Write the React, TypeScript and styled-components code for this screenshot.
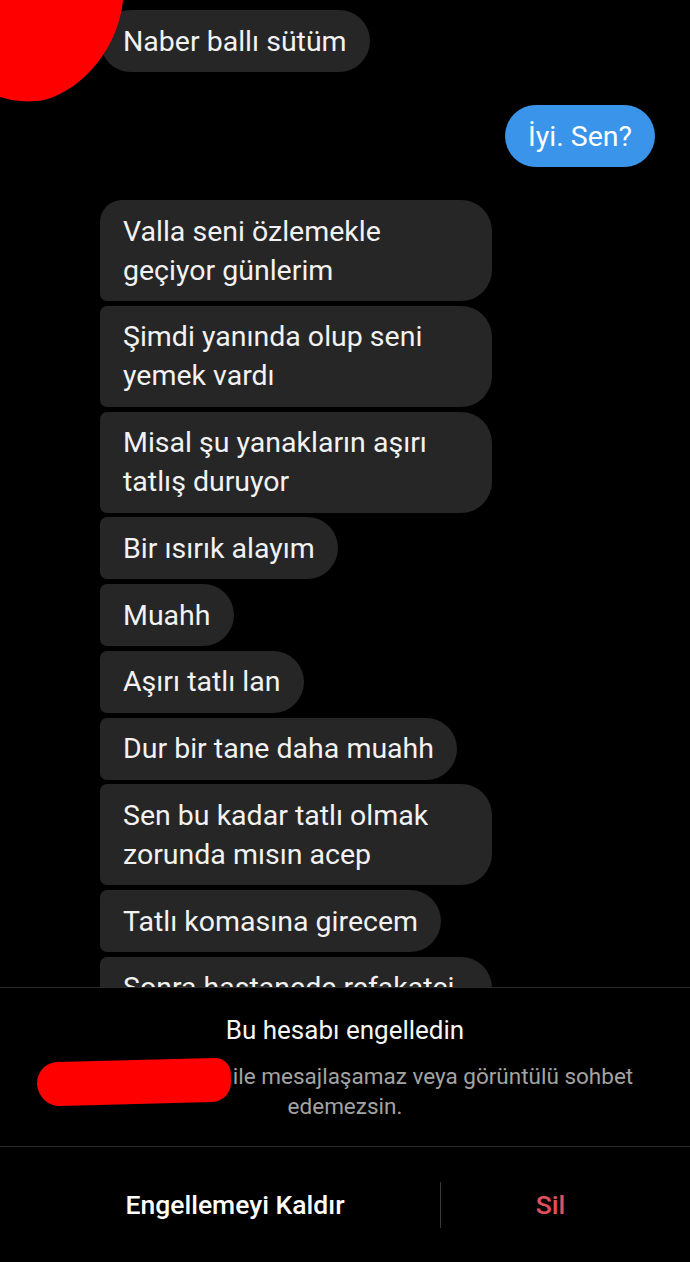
import styled, { createGlobalStyle } from 'styled-components';

const GlobalStyle = createGlobalStyle`
  html, body {
    margin: 0;
    padding: 0;
    background: #000;
  }
  body {
    font-family: Roboto, "Noto Sans", "Liberation Sans", sans-serif;
    -webkit-font-smoothing: antialiased;
  }
`;

type Pos = 'single' | 'first' | 'middle' | 'last';

const incoming = [
  'Valla seni özlemekle geçiyor günlerim',
  'Şimdi yanında olup seni yemek vardı',
  'Misal şu yanakların aşırı tatlış duruyor',
  'Bir ısırık alayım',
  'Muahh',
  'Aşırı tatlı lan',
  'Dur bir tane daha muahh',
  'Sen bu kadar tatlı olmak zorunda mısın acep',
  'Tatlı komasına girecem',
  'Sonra hastanede refakatçi olursun',
];

export default function App() {
  return (
    <Page>
      <GlobalStyle />
      <Thread>
        <AvatarRedaction viewBox="0 0 124 102" aria-hidden>
          <path d="M0 0 L123 0 C121 22 112 44 98 62 C84 80 66 94 44 100 C28 103 12 101 0 97 Z" fill="#ff0000" />
        </AvatarRedaction>

        <Group>
          <Bubble $pos="single">Naber ballı sütüm</Bubble>
        </Group>

        <Group $mine>
          <Bubble $pos="single" $mine>
            İyi. Sen?
          </Bubble>
        </Group>

        <Group>
          {incoming.map((text, i) => (
            <Bubble key={i} $pos={i === 0 ? 'first' : 'middle'}>
              {text}
            </Bubble>
          ))}
        </Group>
      </Thread>

      <BlockedPanel>
        <BlockedTitle>Bu hesabı engelledin</BlockedTitle>
        <BlockedNote>
          <NameRedaction aria-hidden />
          ile mesajlaşamaz veya görüntülü sohbet edemezsin.
        </BlockedNote>
      </BlockedPanel>

      <Actions>
        <ActionButton>Engellemeyi Kaldır</ActionButton>
        <ActionDivider />
        <ActionButton $danger>Sil</ActionButton>
      </Actions>
    </Page>
  );
}

const Page = styled.div`
  width: 690px;
  height: 1262px;
  display: flex;
  flex-direction: column;
  background: #000;
  overflow: hidden;
`;

const Thread = styled.div`
  position: relative;
  flex: 1;
  min-height: 0;
  overflow: hidden;
  display: flex;
  flex-direction: column;
  gap: 33px;
  padding: 10px 35px 0 100px;
`;

const AvatarRedaction = styled.svg`
  position: absolute;
  top: 0;
  left: 0;
  width: 124px;
  height: 102px;
  z-index: 2;
`;

const Group = styled.div<{ $mine?: boolean }>`
  display: flex;
  flex-direction: column;
  align-items: ${(p) => (p.$mine ? 'flex-end' : 'flex-start')};
  gap: 4.75px;
`;

const radii: Record<Pos, string> = {
  single: '31px',
  first: '22px 31px 31px 7px',
  middle: '7px 31px 31px 7px',
  last: '7px 31px 31px 22px',
};

const Bubble = styled.div<{ $pos: Pos; $mine?: boolean }>`
  box-sizing: border-box;
  max-width: 392px;
  padding: 11.5px 23px;
  border-radius: ${(p) => radii[p.$pos]};
  background: ${(p) => (p.$mine ? '#3a95ea' : '#262626')};
  color: ${(p) => (p.$mine ? '#ffffff' : '#f2f2f2')};
  font-size: 28.5px;
  line-height: 39px;
  flex-shrink: 0;
`;

const BlockedPanel = styled.div`
  flex-shrink: 0;
  display: flex;
  flex-direction: column;
  align-items: center;
  gap: 15px;
  padding: 26px 30px 25px;
  border-top: 1px solid #2a2a2a;
  border-bottom: 1px solid #2a2a2a;
  background: #000;
  text-align: center;
`;

const BlockedTitle = styled.div`
  color: #f5f5f5;
  font-size: 26px;
  line-height: 32px;
`;

const BlockedNote = styled.div`
  color: #a3a3a3;
  font-size: 22.5px;
  line-height: 30px;
`;

const NameRedaction = styled.span`
  display: inline-block;
  vertical-align: top;
  width: 194px;
  height: 44px;
  margin: -1px 2px -13px -20px;
  background: #ff0000;
  border-radius: 24px 18px 22px 26px;
  transform: rotate(-1.5deg);
`;

const Actions = styled.div`
  height: 115px;
  flex-shrink: 0;
  display: grid;
  grid-template-columns: 410px 1px 1fr;
  align-items: center;
  padding: 0 30px;
`;

const ActionButton = styled.div<{ $danger?: boolean }>`
  text-align: center;
  font-size: 26.5px;
  font-weight: 500;
  color: ${(p) => (p.$danger ? '#e0505b' : '#ffffff')};
`;

const ActionDivider = styled.div`
  width: 1px;
  height: 46px;
  background: #3a3a3a;
`;
